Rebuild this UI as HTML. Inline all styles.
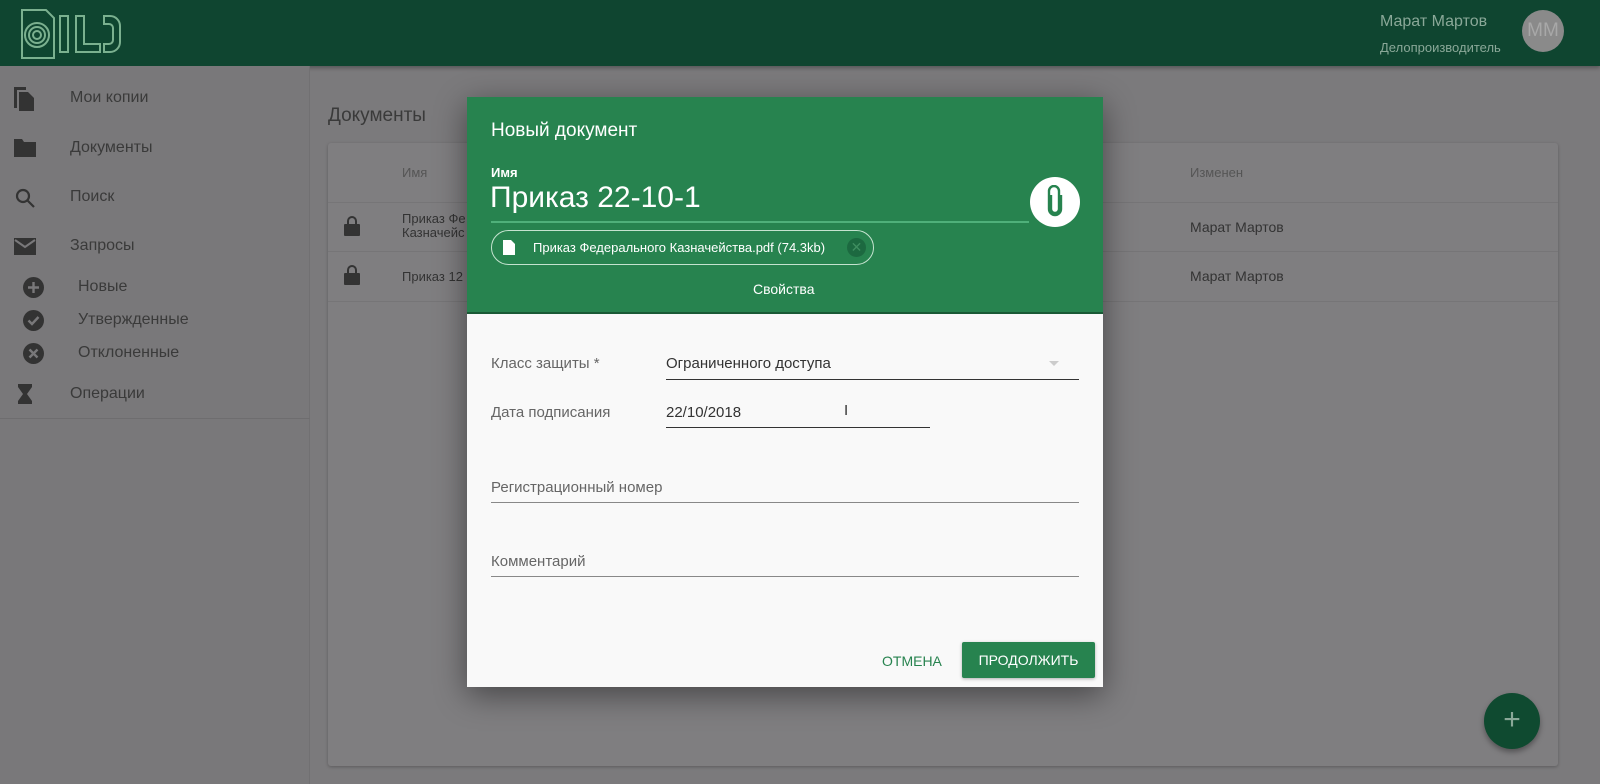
<!DOCTYPE html>
<html><head><meta charset="utf-8"><style>
*{box-sizing:border-box;margin:0;padding:0}
body{width:1600px;height:784px;overflow:hidden;background:#7b7a7c;font-family:"Liberation Sans",sans-serif;position:relative}
.abs{position:absolute}
.top{left:0;top:0;width:1600px;height:66px;background:#0f4530;box-shadow:0 2px 4px rgba(0,0,0,.3)}
.side{left:0;top:66px;width:310px;height:718px;background:#79787a;border-right:1px solid #717072}
.nav{color:#3a3a3a;font-size:16px}
.card{left:328px;top:143px;width:1230px;height:623px;background:#7f7e80;border-radius:3px;box-shadow:0 1px 3px rgba(0,0,0,.25)}
.dlg{left:467px;top:97px;width:636px;height:590px;background:#f9f9f9;box-shadow:0 8px 30px rgba(0,0,0,.45)}
.gh{left:0;top:0;width:636px;height:217px;background:#27834f;border-bottom:2px solid #1a5a36}
.lbl{color:#666;font-size:15px}
.line{height:1px;background:#555}
</style></head><body>
<div class="abs top">
 <svg class="abs" style="left:20px;top:8px" width="102" height="52" viewBox="0 0 102 52" fill="none" stroke="#7bb08f" stroke-width="2">
  <path d="M2 2h24l8 8v40H2z"/><circle cx="17" cy="27" r="4"/><circle cx="17" cy="27" r="8"/><circle cx="17" cy="27" r="12"/>
  <rect x="40" y="8" width="8" height="36"/><path d="M56 8h8v28h16v8H56z"/><path d="M84 8h6a10 10 0 0 1 10 10v16a10 10 0 0 1-10 10h-6v-8h5a4 4 0 0 0 4-4V20a4 4 0 0 0-4-4h-5z"/>
 </svg>
 <div class="abs" style="left:1380px;top:13px;color:#8aa898;font-size:16px">Марат Мартов</div>
 <div class="abs" style="left:1380px;top:40px;color:#8aa898;font-size:13px">Делопроизводитель</div>
 <div class="abs" style="left:1522px;top:10px;width:42px;height:42px;border-radius:50%;background:#8a8a8a;color:#a8a8a8;font-size:19px;text-align:center;line-height:42px">ММ</div>
</div>
<div class="abs side"></div>
<svg class="abs" style="left:14px;top:87px" width="22" height="24" viewBox="0 0 22 24" fill="#333"><path d="M0 0h12v3H3v18H0z"/><path d="M5 5h9l6 6v13H5z"/></svg>
<div class="abs nav" style="left:70px;top:89px">Мои копии</div>
<svg class="abs" style="left:14px;top:139px" width="22" height="18" fill="#333"><path d="M0 0h8l2 3h12v15H0z"/></svg>
<div class="abs nav" style="left:70px;top:139px">Документы</div>
<svg class="abs" style="left:15px;top:188px" width="22" height="22" fill="none" stroke="#333" stroke-width="2.2"><circle cx="8" cy="8" r="6"/><path d="M12 12l7 7"/></svg>
<div class="abs nav" style="left:70px;top:188px">Поиск</div>
<svg class="abs" style="left:14px;top:238px" width="22" height="17"><rect width="22" height="17" fill="#333"/><path d="M1 2l10 7 10-7" fill="none" stroke="#79787a" stroke-width="2"/></svg>
<div class="abs nav" style="left:70px;top:237px">Запросы</div>
<svg class="abs" style="left:23px;top:277px" width="21" height="88"><circle cx="10.5" cy="10.5" r="10.5" fill="#333"/><path d="M10.5 5v11M5 10.5h11" stroke="#79787a" stroke-width="2.4"/><circle cx="10.5" cy="43.5" r="10.5" fill="#333"/><path d="M5.5 43.5l3.5 3.5 6.5-7" fill="none" stroke="#79787a" stroke-width="2.4"/><circle cx="10.5" cy="76.5" r="10.5" fill="#333"/><path d="M6.5 72.5l8 8M14.5 72.5l-8 8" stroke="#79787a" stroke-width="2.4"/></svg>
<div class="abs nav" style="left:78px;top:278px">Новые</div>
<div class="abs nav" style="left:78px;top:311px">Утвержденные</div>
<div class="abs nav" style="left:78px;top:344px">Отклоненные</div>
<svg class="abs" style="left:18px;top:384px" width="14" height="20" fill="#333"><path d="M0 0h14v3l-5 7 5 7v3H0v-3l5-7-5-7z"/></svg>
<div class="abs nav" style="left:70px;top:385px">Операции</div>
<div class="abs" style="left:0;top:418px;width:310px;height:1px;background:#6e6d6f"></div>

<div class="abs" style="left:328px;top:105px;font-size:19px;color:#3a3a3a">Документы</div>
<div class="abs card">
 <div class="abs" style="left:74px;top:22px;font-size:13px;color:#555">Имя</div>
 <div class="abs" style="left:862px;top:22px;font-size:13px;color:#555">Изменен</div>
 <div class="abs" style="left:0;top:59px;width:1230px;height:1px;background:#767577"></div>
 <div class="abs" style="left:0;top:108px;width:1230px;height:1px;background:#767577"></div>
 <div class="abs" style="left:0;top:158px;width:1230px;height:1px;background:#767577"></div>
 <svg class="abs" style="left:16px;top:72px" width="16" height="21" fill="#333"><path d="M3 9V6a5 5 0 0 1 10 0v3h-2V6a3 3 0 0 0-6 0v3z"/><rect y="9" width="16" height="12" rx="1"/></svg>
 <svg class="abs" style="left:16px;top:121px" width="16" height="21" fill="#333"><path d="M3 9V6a5 5 0 0 1 10 0v3h-2V6a3 3 0 0 0-6 0v3z"/><rect y="9" width="16" height="12" rx="1"/></svg>
 <div class="abs" style="left:74px;top:69px;font-size:13px;color:#333;line-height:14px">Приказ Фе<br>Казначейс</div>
 <div class="abs" style="left:74px;top:126px;font-size:13px;color:#333">Приказ 12</div>
 <div class="abs" style="left:862px;top:76px;font-size:14px;color:#333">Марат Мартов</div>
 <div class="abs" style="left:862px;top:125px;font-size:14px;color:#333">Марат Мартов</div>
</div>
<div class="abs" style="left:1484px;top:693px;width:56px;height:56px;border-radius:50%;background:#0f4a30;color:#8aa898;font-size:30px;text-align:center;line-height:54px;box-shadow:0 3px 6px rgba(0,0,0,.35)">+</div>

<div class="abs dlg">
 <div class="abs gh">
  <div class="abs" style="left:24px;top:23px;font-size:19px;color:#fff">Новый документ</div>
  <div class="abs" style="left:24px;top:68px;font-size:13px;color:#fff;font-weight:bold">Имя</div>
  <div class="abs" style="left:23px;top:84px;font-size:30px;color:#fff">Приказ 22-10-1</div>
  <div class="abs" style="left:24px;top:124px;width:538px;height:2px;background:#4fb07a"></div>
  <div class="abs" style="left:563px;top:80px;width:50px;height:50px;border-radius:50%;background:#fff"></div>
  <svg class="abs" style="left:576px;top:88px" width="24" height="34" fill="none" stroke="#27834f" stroke-width="2.4"><path d="M8 10v14a4 4 0 0 0 8 0V6a5 5 0 0 0-10 0v18a6 6 0 0 0 12 0V10"/></svg>
  <div class="abs" style="left:24px;top:133px;width:383px;height:35px;border:1px solid #c4e3cf;border-radius:18px"></div>
  <svg class="abs" style="left:36px;top:143px" width="12" height="15" fill="#fff"><path d="M0 0h8l4 4v11H0z"/></svg>
  <div class="abs" style="left:66px;top:143px;font-size:13px;color:#fff">Приказ Федерального Казначейства.pdf (74.3kb)</div>
  <div class="abs" style="left:380px;top:141px;width:19px;height:19px;border-radius:50%;background:#1c6940;color:#3f8e60;font-size:14px;text-align:center;line-height:19px">✕</div>
  <div class="abs" style="left:286px;top:184px;font-size:14px;color:#fff">Свойства</div>
 </div>
 <div class="abs lbl" style="left:24px;top:258px">Класс защиты *</div>
 <div class="abs" style="left:199px;top:258px;font-size:15px;color:#333">Ограниченного доступа</div>
 <div class="abs" style="left:582px;top:264px;width:0;height:0;border-left:5px solid transparent;border-right:5px solid transparent;border-top:5px solid #ccc"></div>
 <div class="abs line" style="left:199px;top:282px;width:413px;background:#333"></div>
 <div class="abs lbl" style="left:24px;top:307px">Дата подписания</div>
 <div class="abs" style="left:199px;top:307px;font-size:15px;color:#333">22/10/2018</div>
 <div class="abs" style="left:377px;top:305px;font-size:15px;color:#333">I</div>
 <div class="abs line" style="left:199px;top:330px;width:264px;background:#333"></div>
 <div class="abs lbl" style="left:24px;top:382px">Регистрационный номер</div>
 <div class="abs line" style="left:24px;top:405px;width:588px;background:#888"></div>
 <div class="abs lbl" style="left:24px;top:456px">Комментарий</div>
 <div class="abs line" style="left:24px;top:479px;width:588px;background:#888"></div>
 <div class="abs" style="left:415px;top:556px;font-size:14px;color:#27834f">ОТМЕНА</div>
 <div class="abs" style="left:495px;top:545px;width:133px;height:36px;background:#27834f;border-radius:2px;color:#fff;font-size:14px;text-align:center;line-height:36px;box-shadow:0 1px 3px rgba(0,0,0,.3)">ПРОДОЛЖИТЬ</div>
</div>
</body></html>
